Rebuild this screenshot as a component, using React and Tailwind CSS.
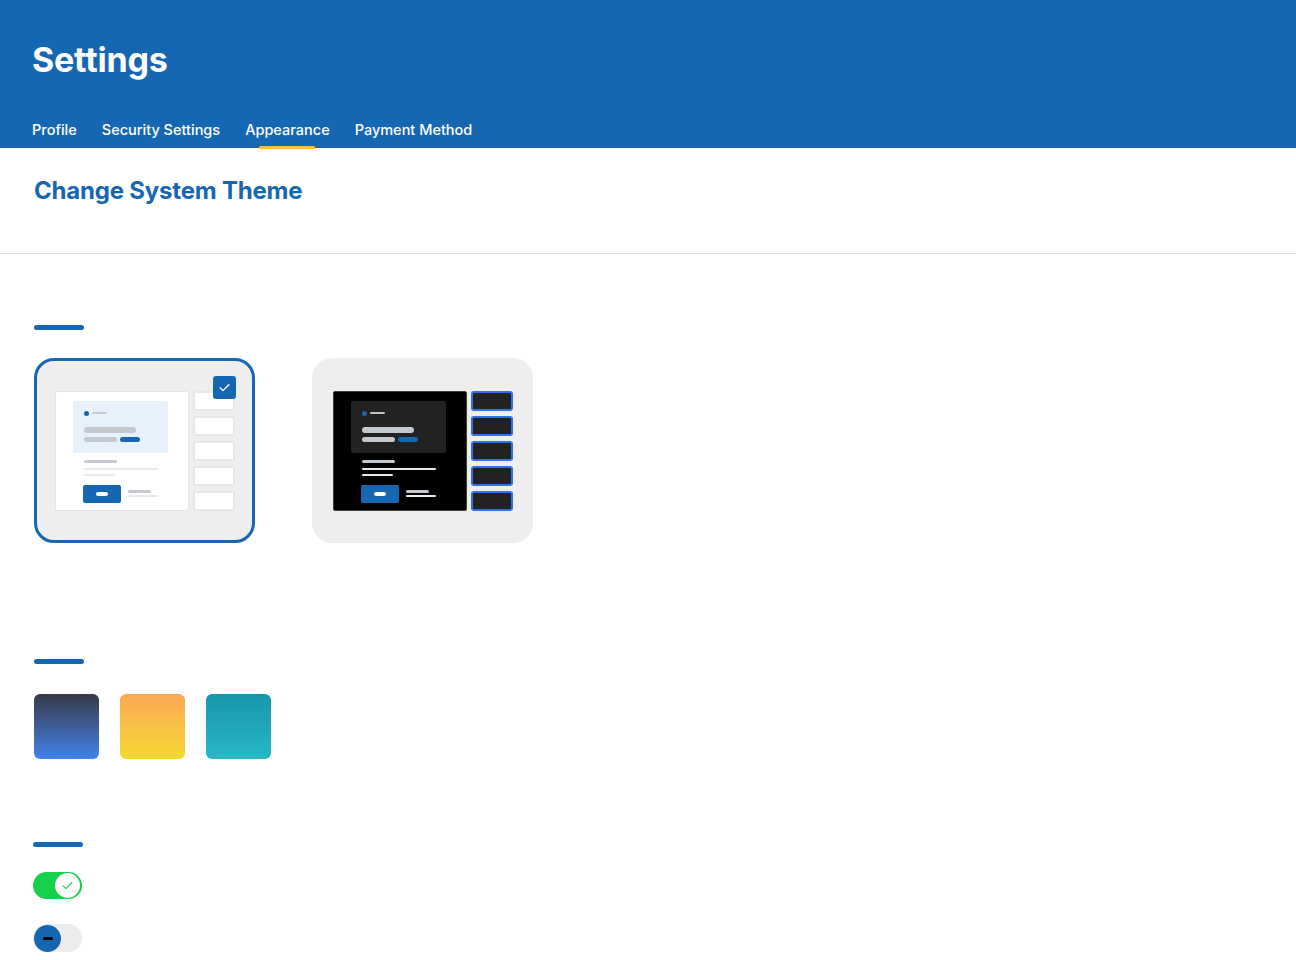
import React from "react";

const BLUE = "bg-[#1667b2]";

function Check({ className = "", color = "white", w = 2 }) {
  return (
    <svg viewBox="0 0 24 24" className={className} fill="none" stroke={color} strokeWidth={w} strokeLinecap="round" strokeLinejoin="round">
      <path d="M5 12.5l4.5 4.5L19 7.5" />
    </svg>
  );
}

function Preview({ dark }) {
  const panel = dark ? "bg-black border-[#3d3d3d]" : "bg-white border-[#e3e4e7]";
  const box = dark ? "bg-[#222222]" : "bg-[#e7f1fb]";
  const grayBar = dark ? "bg-[#c3c8cf]" : "bg-[#c4c8cf]";
  const line1 = dark ? "bg-[#c3c8cf]" : "bg-[#c6cad0]";
  const line2 = dark ? "bg-[#e8e9eb]" : "bg-[#e6e8eb]";
  const tiny = dark ? "bg-[#c4c4c4]" : "bg-[#c9c9c9]";
  const side = dark
    ? "bg-[#222222] border-[#2f6ff0] rounded-[3px]"
    : "bg-white border-[#e6e7ea] rounded-[2px]";
  return (
    <div className="flex items-center justify-center gap-[4px] h-full">
      <div className={`w-[134px] h-[120px] border rounded-[2px] ${panel} pl-[17px] pt-[9px]`}>
        <div className={`w-[95px] h-[52px] rounded-[2px] ${box} pl-[11px] pt-[10px]`}>
          <div className="flex items-center gap-[3px] h-[5px]">
            <div className="w-[5px] h-[5px] rounded-full bg-[#1667b2]" />
            <div className={`w-[15px] h-[2px] rounded-full ${tiny}`} />
          </div>
          <div className={`mt-[11px] w-[52px] h-[6px] rounded-full ${grayBar}`} />
          <div className="mt-[4px] flex gap-[3px]">
            <div className={`w-[33px] h-[5px] rounded-full ${grayBar}`} />
            <div className="w-[20px] h-[5px] rounded-full bg-[#1667b2]" />
          </div>
        </div>
        <div className="pl-[11px]">
          <div className={`mt-[7px] w-[33px] h-[3px] rounded-full ${line1}`} />
          <div className={`mt-[5px] w-[74px] h-[2px] rounded-full ${line2}`} />
          <div className={`mt-[4px] w-[31px] h-[2px] rounded-full ${line2}`} />
          <div className="mt-[9px] flex items-center gap-[7px] -ml-[1px]">
            <div className="w-[38px] h-[18px] rounded-[2px] bg-[#1667b2] flex items-center justify-center">
              <div className="w-[12px] h-[4px] rounded-full bg-white" />
            </div>
            <div className="flex flex-col gap-[2px]">
              <div className={`w-[23px] h-[3px] rounded-full ${line1}`} />
              <div className={`w-[30px] h-[2px] rounded-full ${line2}`} />
            </div>
          </div>
        </div>
      </div>
      <div className="flex flex-col gap-[5px]">
        {[0, 1, 2, 3, 4].map((i) => (
          <div key={i} className={`w-[42px] h-[20px] border-2 ${side}`} />
        ))}
      </div>
    </div>
  );
}

export default function App() {
  const tabs = ["Profile", "Security Settings", "Appearance", "Payment Method"];
  return (
    <div className="min-h-screen bg-white" style={{ fontFamily: "Inter, 'Noto Sans', sans-serif" }}>
      <header className={`${BLUE} h-[148px] px-[32px] flex flex-col`}>
        <h1 className="pt-[40px] text-[34px] leading-[40px] font-bold text-white tracking-[-0.2px]">Settings</h1>
        <nav className="mt-auto flex gap-[25px]">
          {tabs.map((t) => (
            <div key={t} className="relative pb-[8px]">
              <span className="block text-[14.5px] leading-[20px] font-medium text-white">{t}</span>
              {t === "Appearance" && (
                <div className="absolute left-1/2 -translate-x-1/2 bottom-[-1px] h-[3px] w-[56px] rounded-full bg-[#f5c431]" />
              )}
            </div>
          ))}
        </nav>
      </header>

      <main>
        <h2 className="px-[34px] pt-[27px] text-[24px] leading-[32px] font-bold text-[#1667b2] tracking-[-0.2px]">Change System Theme</h2>
        <div className="mt-[46px] h-px bg-[#dedede]" />

        <section className="px-[34px]">
          <div className={`mt-[71px] w-[50px] h-[5px] rounded-full ${BLUE}`} />
          <div className="mt-[28px] flex gap-[57px]">
            <div className="relative w-[221px] h-[185px] rounded-[20px] border-[3px] border-[#1667b2] bg-[#eeeeee]">
              <Preview dark={false} />
              <div className="absolute left-[176px] top-[15px] w-[23px] h-[23px] rounded-[3px] bg-[#1667b2] flex items-center justify-center">
                <Check className="w-[15px] h-[15px]" />
              </div>
            </div>
            <div className="relative w-[221px] h-[185px] rounded-[20px] border-[3px] border-transparent bg-[#eeeeee]">
              <Preview dark />
            </div>
          </div>

          <div className={`mt-[116px] w-[50px] h-[5px] rounded-full ${BLUE}`} />
          <div className="mt-[30px] flex gap-[21px]">
            <div className="w-[65px] h-[65px] rounded-[6px] bg-linear-to-b from-[#363a4b] to-[#3f83ee]" />
            <div className="w-[65px] h-[65px] rounded-[6px] bg-linear-to-b from-[#fca854] to-[#f4d92d]" />
            <div className="w-[65px] h-[65px] rounded-[6px] bg-linear-to-b from-[#1796ab] to-[#28b8c5]" />
          </div>

          <div className={`mt-[83px] -ml-px w-[50px] h-[5px] rounded-full ${BLUE}`} />
          <div className="mt-[25px] -ml-px w-[49px] h-[27px] rounded-full bg-[#14d04a] flex items-center justify-end pr-[2px]">
            <div className="w-[25px] h-[25px] rounded-full bg-white flex items-center justify-center">
              <Check className="w-[15px] h-[15px]" color="#14c948" w={1.8} />
            </div>
          </div>
          <div className="mt-[25px] -ml-px w-[49px] h-[28px] rounded-full bg-[#ececec] flex items-center pl-[1px]">
            <div className="w-[27px] h-[27px] rounded-full bg-[#1667b2] flex items-center justify-center">
              <div className="w-[10px] h-[3px] rounded-full bg-black" />
            </div>
          </div>
        </section>
      </main>
    </div>
  );
}
